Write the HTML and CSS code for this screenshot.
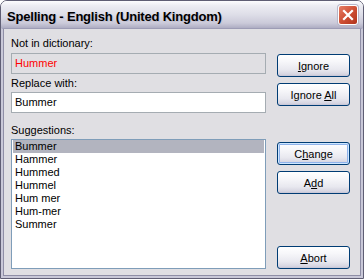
FILE: index.html
```html
<!DOCTYPE html>
<html lang="en">
<head>
    <meta charset="UTF-8">
    <title>Spelling - English (United Kingdom)</title>
    <link rel="stylesheet" href="styles.css">
</head>
<body>
    <div class="window">
        <div class="titlebar">
            <span class="title">Spelling - English (United Kingdom)</span>
            <button class="close" type="button">
                <svg width="18" height="18" viewBox="0 0 18 18">
                    <path d="M5 5 L13 13 M13 5 L5 13" stroke="#fff" stroke-width="2.2" stroke-linecap="square"/>
                </svg>
            </button>
        </div>
        <div class="dialog">
            <div class="main">
                <label class="caption">Not in dictionary:</label>
                <div class="field readonly">Hummer</div>
                <label class="caption">Replace with:</label>
                <div class="field replace">Bummer</div>
                <label class="caption sugg">Suggestions:</label>
                <ul class="list">
                    <li class="selected">Bummer</li>
                    <li>Hammer</li>
                    <li>Hummed</li>
                    <li>Hummel</li>
                    <li>Hum mer</li>
                    <li>Hum-mer</li>
                    <li>Summer</li>
                </ul>
            </div>
            <div class="buttons">
                <button type="button"><u>I</u>gnore</button>
                <button type="button" class="near">Ignore <u>A</u>ll</button>
                <button type="button" class="default group">C<u>h</u>ange</button>
                <button type="button" class="near">A<u>d</u>d</button>
                <button type="button" class="bottom"><u>A</u>bort</button>
            </div>
        </div>
    </div>
</body>
</html>
```

FILE: styles.css
```css
body {
    margin: 0;
    font-family: "Liberation Sans", Arial, sans-serif;
    font-size: 11px;
}
.window {
    width: 364px;
    height: 279px;
    box-sizing: border-box;
    border: 1px solid #5f5e74;
    border-radius: 7px 7px 0 0;
    display: flex;
    flex-direction: column;
    overflow: hidden;
}
.titlebar {
    height: 27px;
    flex-shrink: 0;
    display: flex;
    justify-content: space-between;
    align-items: flex-start;
    padding: 0 5px 0 6px;
    background: linear-gradient(#fdfdfe 0%, #ececf2 18%, #dedee8 50%, #cbcad9 82%, #aeadc3 100%);
}
.title {
    margin-top: 8px;
    font-size: 13px;
    font-weight: bold;
    line-height: 16px;
    letter-spacing: -0.2px;
    color: #000;
    text-shadow: 1px 1px 0 #c2c1d2;
}
.close {
    margin-top: 4px;
    width: 20px;
    height: 20px;
    padding: 0;
    border: 1px solid #fff;
    border-radius: 3px;
    background: linear-gradient(135deg, #e67e66, #cf5035 50%, #b0331c);
    display: flex;
    align-items: center;
    justify-content: center;
    box-shadow: 0 0 0 1px #b7b6c8;
}
.dialog {
    flex: 1;
    display: flex;
    background: #e0dfe3;
    border: 2px solid #c9c8d8;
    border-top: 1px solid #9d9cb5;
    box-shadow: inset 1px 0 0 #8f8ea6, inset -1px 0 0 #8f8ea6, inset 0 -1px 0 #8f8ea6;
    padding: 8px 11px 7px 8px;
}
.main {
    width: 255px;
    display: flex;
    flex-direction: column;
}
.caption {
    line-height: 13px;
    height: 13px;
}
.caption + .field {
    margin-top: 3px;
}
.field + .caption {
    margin-top: 3px;
}
.field.replace {
    margin-top: 2px;
}
.caption.sugg {
    margin-top: 11px;
}
.field {
    height: 21px;
    box-sizing: border-box;
    border: 1px solid #a5acb2;
    padding: 0 3px;
    line-height: 19px;
    background: #fff;
}
.field.readonly {
    background: #e0dfe3;
    color: #ff0000;
}
.list {
    margin: 2px 0 0;
    padding: 0 1px;
    list-style: none;
    height: 130px;
    box-sizing: border-box;
    border: 1px solid #7f9db9;
    background: #fff;
}
.list li {
    height: 13px;
    line-height: 13px;
    padding-left: 2px;
}
.list .selected {
    background: #b2b4bf;
}
.buttons {
    margin-left: 11px;
    padding-top: 17px;
    display: flex;
    flex-direction: column;
}
.buttons button {
    width: 73px;
    height: 23px;
    padding: 0;
    font-family: "Liberation Sans", Arial, sans-serif;
    font-size: 11px;
    color: #000;
    border: 1px solid #003c74;
    border-radius: 3px;
    background: linear-gradient(#ffffff 0%, #f7f7fa 30%, #e8e8ef 70%, #d6d5e1 92%, #c4c3d4 100%);
}
.buttons .near {
    margin-top: 6px;
}
.buttons .group {
    margin-top: 36px;
}
.buttons .bottom {
    margin-top: auto;
}
.buttons .default {
    box-shadow: inset 0 0 0 1px #cee7ff, inset 0 0 0 2px #8fb2ea;
}
```
